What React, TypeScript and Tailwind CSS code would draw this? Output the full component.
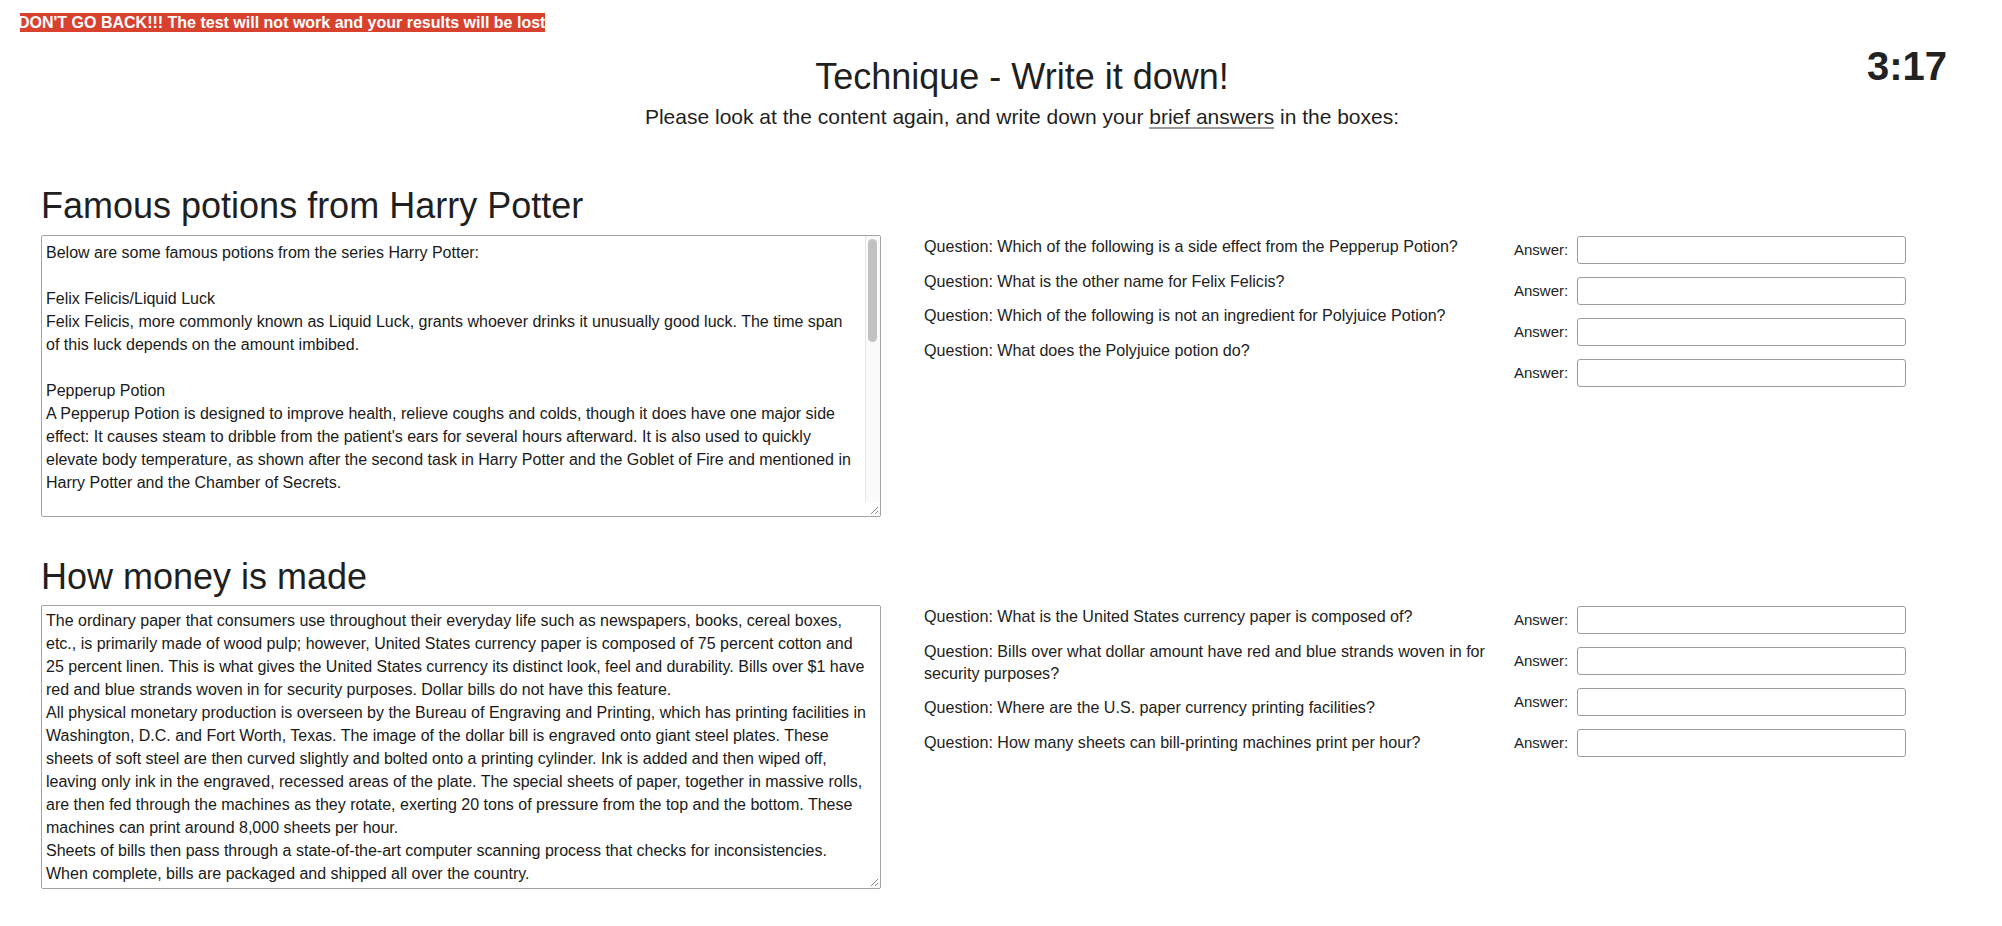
import React from "react";

const potionLines = [
  "Below are some famous potions from the series Harry Potter:",
  "",
  "Felix Felicis/Liquid Luck",
  "Felix Felicis, more commonly known as Liquid Luck, grants whoever drinks it unusually good luck. The time span",
  "of this luck depends on the amount imbibed.",
  "",
  "Pepperup Potion",
  "A Pepperup Potion is designed to improve health, relieve coughs and colds, though it does have one major side",
  "effect: It causes steam to dribble from the patient's ears for several hours afterward. It is also used to quickly",
  "elevate body temperature, as shown after the second task in Harry Potter and the Goblet of Fire and mentioned in",
  "Harry Potter and the Chamber of Secrets.",
  "",
  "Polyjuice Potion",
  "The Polyjuice Potion allows the drinker to assume the form of someone else.",
];

const moneyLines = [
  "The ordinary paper that consumers use throughout their everyday life such as newspapers, books, cereal boxes,",
  "etc., is primarily made of wood pulp; however, United States currency paper is composed of 75 percent cotton and",
  "25 percent linen. This is what gives the United States currency its distinct look, feel and durability. Bills over $1 have",
  "red and blue strands woven in for security purposes. Dollar bills do not have this feature.",
  "All physical monetary production is overseen by the Bureau of Engraving and Printing, which has printing facilities in",
  "Washington, D.C. and Fort Worth, Texas. The image of the dollar bill is engraved onto giant steel plates. These",
  "sheets of soft steel are then curved slightly and bolted onto a printing cylinder. Ink is added and then wiped off,",
  "leaving only ink in the engraved, recessed areas of the plate. The special sheets of paper, together in massive rolls,",
  "are then fed through the machines as they rotate, exerting 20 tons of pressure from the top and the bottom. These",
  "machines can print around 8,000 sheets per hour.",
  "Sheets of bills then pass through a state-of-the-art computer scanning process that checks for inconsistencies.",
  "When complete, bills are packaged and shipped all over the country.",
];

const potionQuestions: React.ReactNode[] = [
  "Question: Which of the following is a side effect from the Pepperup Potion?",
  "Question: What is the other name for Felix Felicis?",
  "Question: Which of the following is not an ingredient for Polyjuice Potion?",
  "Question: What does the Polyjuice potion do?",
];

const moneyQuestions: React.ReactNode[] = [
  "Question: What is the United States currency paper is composed of?",
  <>
    Question: Bills over what dollar amount have red and blue strands woven in for
    <br />
    security purposes?
  </>,
  "Question: Where are the U.S. paper currency printing facilities?",
  "Question: How many sheets can bill-printing machines print per hour?",
];

function ResizeGrip() {
  return (
    <svg
      className="absolute bottom-[1px] right-[1px]"
      width="10"
      height="10"
      viewBox="0 0 10 10"
    >
      <path d="M9 2 L2 9 M9 6 L6 9" stroke="#8a8a8a" strokeWidth="1" />
    </svg>
  );
}

function FakeTextarea({
  lines,
  height,
  scroll,
  py,
}: {
  lines: string[];
  height: string;
  scroll?: boolean;
  py: string;
}) {
  return (
    <div
      className={`relative w-[840px] ${height} overflow-hidden rounded-[2px] border border-[#a3a3a3] bg-white text-[16px] leading-[23px] text-[#1a1a1a]`}
    >
      <div className={`pl-[4px] ${py}`}>
        {lines.map((l, i) => (
          <div key={i} className="whitespace-nowrap">
            {l || "\u00a0"}
          </div>
        ))}
      </div>
      {scroll && (
        <div className="absolute right-0 top-0 h-[266px] w-[15px] border-l border-[#e6e6e6] bg-[#fafafa]">
          <div className="ml-[2px] mt-[3px] h-[103px] w-[9px] rounded-full bg-[#c1c1c1]" />
        </div>
      )}
      <ResizeGrip />
    </div>
  );
}

function AnswerRow() {
  return (
    <div className="flex items-center">
      <span className="w-[63px] text-[15px] text-[#222]">Answer:</span>
      <input
        type="text"
        className="h-[28px] w-[329px] rounded-[3px] border border-[#9c9c9c] bg-white px-1 outline-none"
      />
    </div>
  );
}

function Section({
  title,
  lines,
  questions,
  height,
  scroll,
  py,
  headMb,
}: {
  title: string;
  lines: string[];
  questions: React.ReactNode[];
  height: string;
  scroll?: boolean;
  py: string;
  headMb: string;
}) {
  return (
    <section className="ml-[41px]">
      <h2 className={`text-[36px] leading-[42px] text-[#1f1f1f] ${headMb}`}>{title}</h2>
      <div className="flex items-start">
        <FakeTextarea lines={lines} height={height} scroll={scroll} py={py} />
        <div className="ml-[43px] w-[585px] text-[16.1px] leading-[22px] text-[#222]">
          <div className="flex flex-col gap-[12.5px]">
            {questions.map((q, i) => (
              <p key={i}>{q}</p>
            ))}
          </div>
        </div>
        <div className="ml-[5px] mt-[1px] flex flex-col gap-[13px]">
          {questions.map((_, i) => (
            <AnswerRow key={i} />
          ))}
        </div>
      </div>
    </section>
  );
}

export default function App() {
  return (
    <div className="min-h-screen w-full bg-white font-['Liberation_Sans',Arial,Helvetica,sans-serif] text-[#222]">
      <div className="pt-[13px] pl-[20px]">
        <div className="h-[19px] w-[525px] overflow-hidden bg-[#d9412f] text-[16px] font-bold leading-[19px] text-white">
          <span className="-ml-[2px] whitespace-nowrap">
            DON'T GO BACK!!! The test will not work and your results will be lost
          </span>
        </div>
      </div>

      <header className="relative pl-[42px] text-center">
        <h1 className="pt-[24px] text-[36px] leading-[42px] text-[#1f1f1f]">
          Technique - Write it down!
        </h1>
        <p className="mt-[7px] text-[21px] leading-[24px] text-[#1f1f1f]">
          Please look at the content again, and write down your{" "}
          <span className="underline decoration-[#9b9b9b] underline-offset-[3px]">
            brief answers
          </span>{" "}
          in the boxes:
        </p>
        <div className="absolute right-[55px] top-[11px] text-[40px] font-bold leading-[46px] text-[#222]">
          3:17
        </div>
      </header>

      <div className="mt-[56px]">
        <Section
          title="Famous potions from Harry Potter"
          lines={potionLines}
          questions={potionQuestions}
          height="h-[282px]"
          scroll
          py="pt-[5px]"
          headMb="mb-[8px]"
        />
      </div>
      <div className="mt-[39px] pb-[37px]">
        <Section
          title="How money is made"
          lines={moneyLines}
          questions={moneyQuestions}
          height="h-[284px]"
          py="pt-[3px]"
          headMb="mb-[7px]"
        />
      </div>
    </div>
  );
}
